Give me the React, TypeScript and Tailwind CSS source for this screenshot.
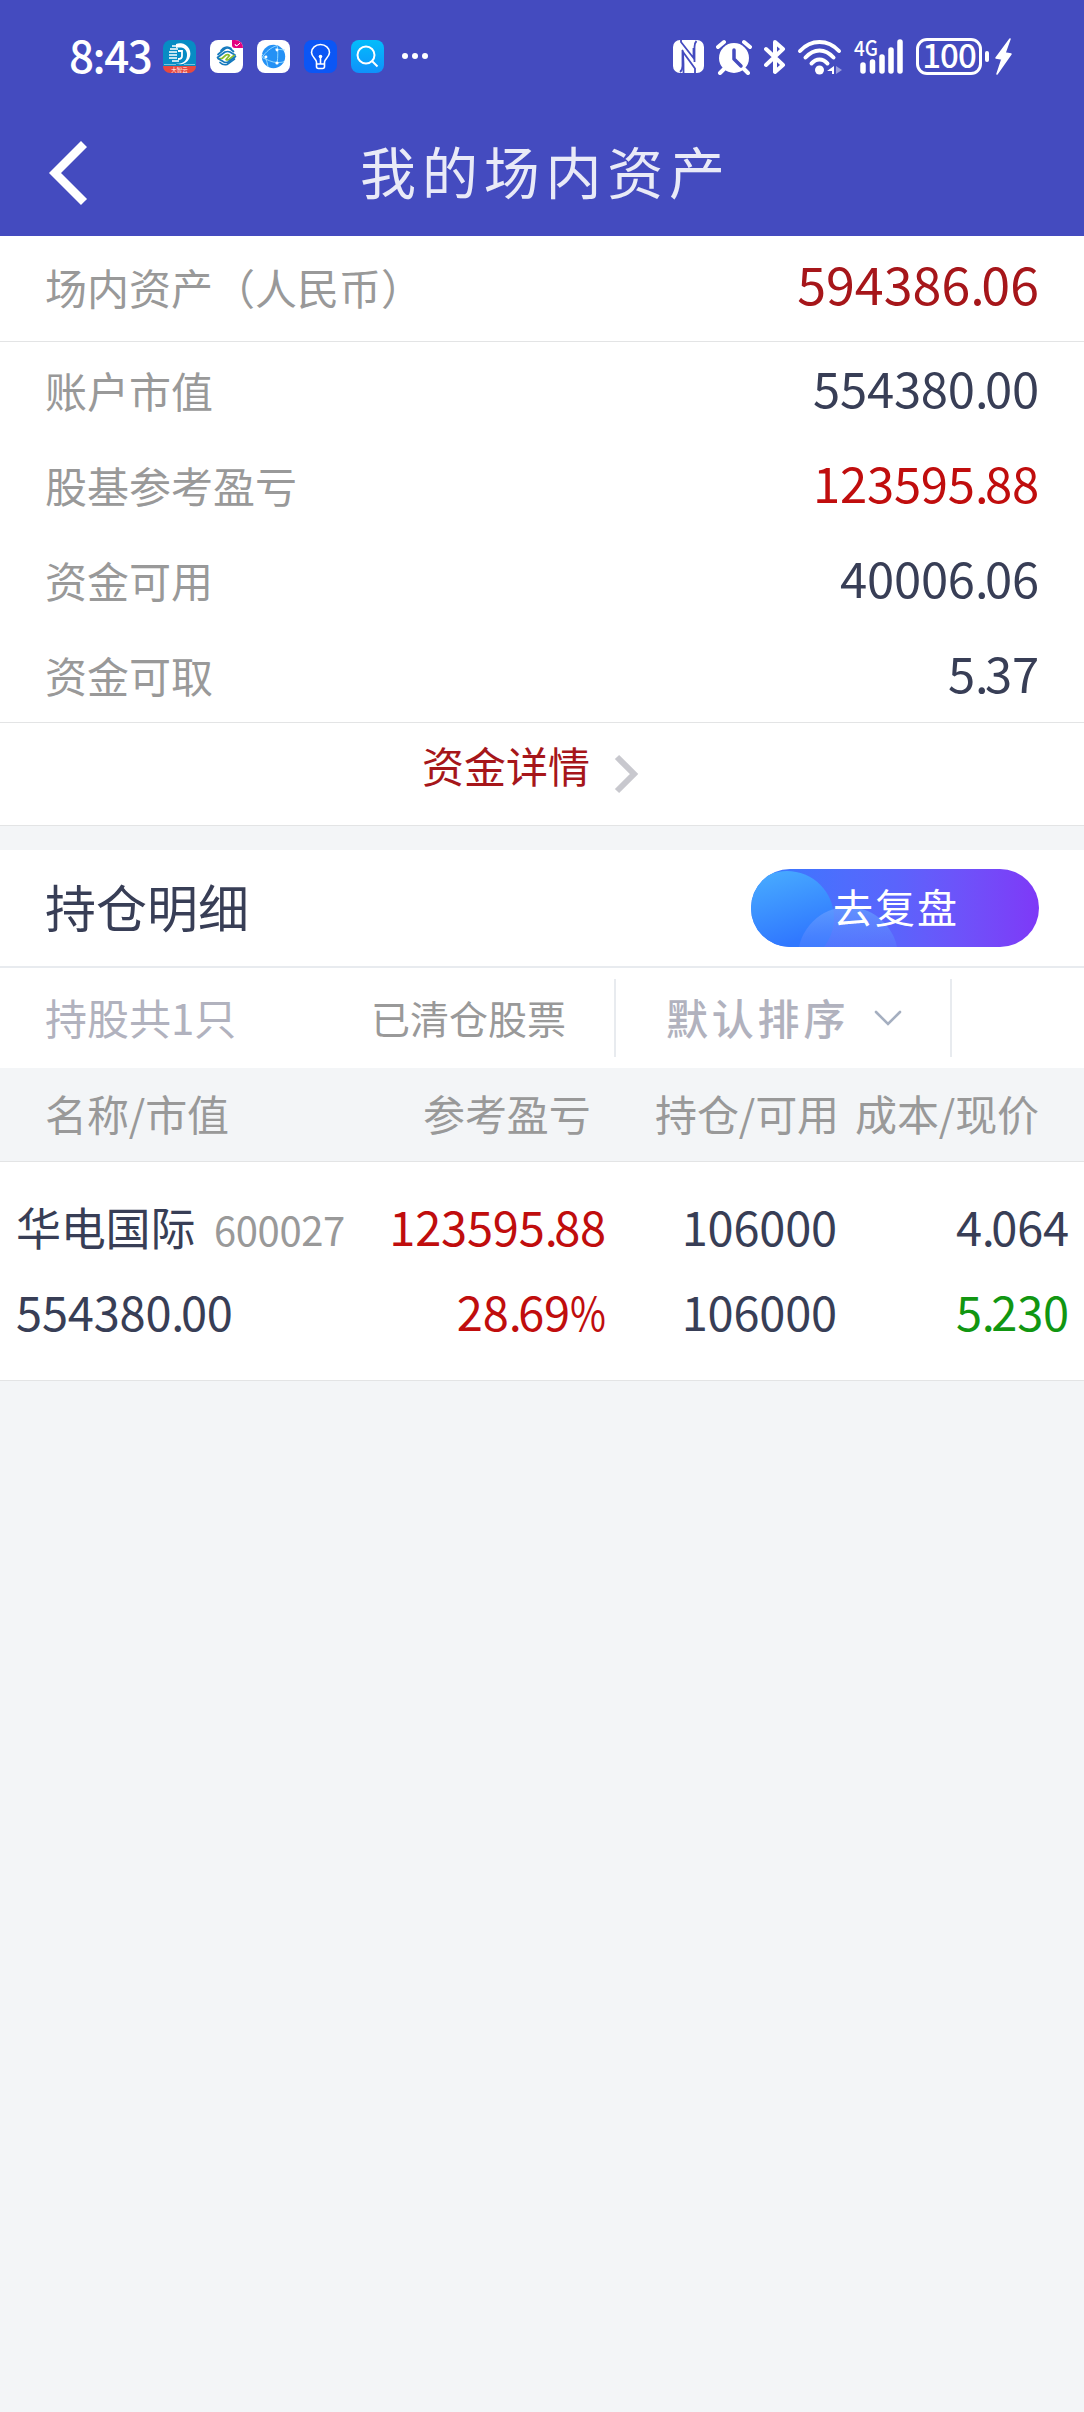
import type { ReactNode } from 'react';

const summary = [
  { label: '账户市值', value: '554380.00', color: 'text-[#383e56]' },
  { label: '股基参考盈亏', value: '123595.88', color: 'text-[#c00d0d]' },
  { label: '资金可用', value: '40006.06', color: 'text-[#383e56]' },
  { label: '资金可取', value: '5.37', color: 'text-[#383e56]' },
];

// Figures are set with a tight decimal point
const Num = ({ value }: { value: string }) => {
  const [whole, rest] = value.split('.');
  return (
    <>
      {whole}
      <span className="tracking-[-3.500px]">.</span>
      {rest}
    </>
  );
};

const AppIcon = ({ children }: { children: ReactNode }) => (
  <svg className="size-[33px]" viewBox="0 0 33 33" fill="none">
    {children}
  </svg>
);

const StatusBar = () => (
  <div className="flex h-[110px] items-center pt-[3px] pl-[69px] text-white">
    <span className="w-[94px] pb-[5px] text-[44px] leading-none font-medium tracking-[-1.500px]">
      8:43
    </span>
    <div className="flex gap-[14px]">
      <AppIcon>
        <rect width="33" height="33" rx="8" fill="#078cc4" />
        <path d="M0 26h33a7 7 0 0 1-7 7H7a7 7 0 0 1-7-7Z" fill="#e8483f" />
        <path d="M1 24.500h12M21 24.500h11" stroke="#74c3df" />
        <path d="M13 4a10.500 10.500 0 1 1 0 19.500c7 1 11-3 11-8.500 0-4-2-7-6-7.500-2 0-4 0-5 .5Z" fill="#fff" />
        <path d="M9 6h7M7 9h8M6 12h8M6 15h8M6 18h8M9 21h7" stroke="#fff" strokeWidth="1.500" />
        <path d="M15 11h4v5q0 3-4 3" stroke="#fff" strokeWidth="1.800" />
        <text x="16.500" y="31.500" fontSize="5.500" textAnchor="middle" fill="#fff">大智云</text>
      </AppIcon>
      <AppIcon>
        <rect width="33" height="33" rx="8" fill="#fff" />
        <path d="M22 0h3a8 8 0 0 1 8 8h-8a3 3 0 0 1-3-3Z" fill="#e4007f" />
        <path d="m25 4 1 2 2-1 2-2" stroke="#fff" />
        <g strokeWidth="1.700" strokeLinecap="round" strokeLinejoin="round">
          <path d="M8 14.500 14.500 9q3-2 6 0l3 2.500" stroke="#1479bd" />
          <path d="M11 10.500 13 8.500q4-3 8 0" stroke="#1479bd" />
          <path d="M7.500 17.500 15 12q3-1 5 0l5 3" stroke="#1479bd" />
          <path d="M9 18.500h3l4-3.500q2-1 3.500.5L16 19.500q1.500 1 3 0l5-4" stroke="#8abf2b" />
          <path d="M8 18.500 14 22q2 1 4 0l7.500-5.500" stroke="#1479bd" />
          <path d="M10 22.500q3 3 7 2l7.500-5.500" stroke="#1479bd" />
        </g>
      </AppIcon>
      <AppIcon>
        <rect width="33" height="33" rx="8" fill="#fff" />
        <circle cx="16.500" cy="16.500" r="11.700" fill="#2491f5" />
        <path d="M20 5.500c-6 2-11 6-15 12 5 2 10 5 15 5 3 0 5 0 7-1M20 5.500c1 3 1 12 0 18M5 14c4 4 5 7 6 13M18 9l10 1" stroke="#9bdcff" strokeWidth="0.900" />
        <circle cx="20" cy="10" r="1.400" fill="#fff" />
        <circle cx="9" cy="17" r="1.400" fill="#fff" />
        <circle cx="20" cy="23" r="1.600" fill="#fff" />
      </AppIcon>
      <AppIcon>
        <rect width="33" height="33" rx="8" fill="#0b56f5" />
        <path
          d="M12.500 22c0-3-5-5-5-9.500a9 8 0 0 1 18 0c0 4.500-5 6.500-5 9.500v4.500q0 2-2 2h-4q-2 0-2-2V22M12.500 24h8M16.500 17v7"
          stroke="#fff"
          strokeWidth="1.600"
        />
        <circle cx="16.500" cy="16.500" r="1.800" fill="#fff" />
      </AppIcon>
      <AppIcon>
        <defs>
          <linearGradient id="search" x1="0" y1="0" x2="0" y2="1">
            <stop stopColor="#03bdfb" />
            <stop offset="1" stopColor="#0f91fb" />
          </linearGradient>
        </defs>
        <rect width="33" height="33" rx="8" fill="url(#search)" />
        <circle cx="15" cy="15" r="8.500" stroke="#fff" strokeWidth="2" />
        <path d="m21 21 5.500 5.500" stroke="#fff" strokeWidth="2" />
      </AppIcon>
    </div>
    <svg className="ml-[17px] h-[33px] w-[28px]" viewBox="0 0 28 33" fill="#fff">
      <circle cx="4" cy="16" r="3" />
      <circle cx="14" cy="16" r="3" />
      <circle cx="24" cy="16" r="3" />
    </svg>

    <div className="ml-[244px] flex items-center">
      {/* nfc */}
      <svg className="h-[33px] w-[31px]" viewBox="0 0 31 33" fill="none">
        <rect width="31" height="33" rx="7" fill="#fff" />
        <path d="M8 0v2l12.500 16V8M10.500 33v-9l-.5-12 12 16.500V33" stroke="#444bbf" strokeWidth="1.800" />
        <path d="M9.500 10v16q0 4-2.500 6M21.500 22V7q0-4 2-6" stroke="#444bbf" strokeWidth="1.800" />
      </svg>
      {/* alarm */}
      <svg className="ml-3 h-[36px] w-[36px]" viewBox="0 0 36 36">
        <circle cx="18" cy="19" r="15" fill="#fff" />
        <path d="m2 8 6-5M34 8l-6-5M8 30l-4 4M28 30l4 4" stroke="#fff" strokeWidth="4" strokeLinecap="round" />
        <path d="M18 11v9l7 7" fill="none" stroke="#444bbf" strokeWidth="3.500" strokeLinecap="round" strokeLinejoin="round" />
      </svg>
      {/* bluetooth */}
      <svg className="ml-3 h-[36px] w-[22px]" viewBox="0 0 22 36" fill="none">
        <path d="m2 10 17 16-8 7V3l8 7L2 26" stroke="#fff" strokeWidth="4" strokeLinecap="round" strokeLinejoin="round" />
      </svg>
      {/* wifi */}
      <svg className="ml-[11px] h-[36px] w-[45px]" viewBox="0 0 45 36" fill="none">
        <path d="M3 12C14 0 31 0 42 12M8.500 18.500C17 9 28 9 36.500 18.500M14.500 24.500C19 19 26 19 30.500 24.500" stroke="#fff" strokeWidth="4" strokeLinecap="round" />
        <circle cx="22.500" cy="31" r="4.500" fill="#fff" />
        <path d="M37 27v8h-2v-3h-5Z" fill="#fff" />
        <path d="m39 27 6 4-6 4Z" fill="#979bdd" />
      </svg>
      {/* mobile signal */}
      <svg className="ml-[11px] h-[38px] w-[51px] overflow-visible" viewBox="0 0 51 38">
        <text x="1" y="18" fontSize="21" fontWeight="500" fill="#fff" textLength="24" lengthAdjust="spacingAndGlyphs">4G</text>
        <path d="M10 27v6M19.500 24v9M29 19v14M38 12v21M47 4v29" stroke="#fff" strokeWidth="5.500" strokeLinecap="round" />
      </svg>
      <div className="ml-[12px] flex h-[37px] w-[66px] items-center justify-center rounded-[11px] border-[3px] border-white">
        <span className="pb-1 text-[33px] leading-none font-medium tracking-[-1px]">100</span>
      </div>
      <div className="ml-[3px] h-[11px] w-1 rounded-full bg-white" />
      <svg className="ml-[6px] h-[37px] w-[17px]" viewBox="0 0 17 37">
        <path d="M15 1 1 20l6 1-5 15 14-20-6-1Z" fill="#fff" stroke="#fff" strokeWidth="1.500" strokeLinejoin="round" />
      </svg>
    </div>
  </div>
);

const TitleBar = () => (
  <div className="flex h-[126px] items-center px-12">
    <svg className="h-[64px] w-[40px]" viewBox="0 0 40 64" fill="none">
      <path d="M36 3 7 32l29 29" stroke="#fff" strokeWidth="8.500" />
    </svg>
    <h1 className="flex-1 pr-[33px] pb-[6px] text-center text-[56px] tracking-[5.800px] text-[#e9eaf7]">
      我的场内资产
    </h1>
  </div>
);

const App = () => {
  return (
    <div className="min-h-[2412px] w-[1084px] bg-[#f3f5f7] font-['Noto_Sans_CJK_SC',sans-serif] leading-none whitespace-nowrap">
      <header className="bg-[#444bbf]">
        <StatusBar />
        <TitleBar />
      </header>

      <section className="bg-white">
        <div className="flex h-[106px] items-center justify-between border-b border-[#e3e4e5] px-[45px]">
          <span className="pb-1 text-[42px] text-[#999]">场内资产（人民币）</span>
          <span className="pb-3 text-[52px] text-[#a6161a]">
            <Num value="594386.06" />
          </span>
        </div>
        {summary.map(({ label, value, color }) => (
          <div key={label} className="flex h-[95px] items-center justify-between px-[45px]">
            <span className="text-[42px] text-[#999]">{label}</span>
            <span className={`pb-[6px] text-[49px] tracking-[-0.200px] ${color}`}>
              <Num value={value} />
            </span>
          </div>
        ))}
        <div className="flex h-[104px] items-center justify-center border-y border-[#e3e4e5] pr-[20px]">
          <span className="pb-[19px] text-[42px] text-[#a6161a]">资金详情</span>
          <svg className="ml-[22px] h-[42px] w-[30px]" viewBox="0 0 30 42" fill="none">
            <path d="m5 4 17 17L5 38" stroke="#c8c8ce" strokeWidth="6" />
          </svg>
        </div>
      </section>

      <section className="mt-6 bg-white">
        <div className="flex h-[118px] items-center justify-between border-b-2 border-[#e8ebef] px-[45px]">
          <h2 className="pb-[4px] text-[51px] text-[#383e56]">持仓明细</h2>
          <button className="relative h-[78px] w-[288px] overflow-hidden rounded-full bg-linear-to-r from-[#2e7bff] via-[#5a64fc] to-[#7e38f7]">
            <svg className="absolute inset-0" width="288" height="78" viewBox="0 0 288 78">
              <defs>
                <linearGradient id="bubble" x1="0" y1="0" x2="0.300" y2="1">
                  <stop stopColor="#4ab0ff" />
                  <stop offset="0.850" stopColor="#3078ff" />
                </linearGradient>
                <linearGradient id="glow" x1="0" y1="0" x2="0" y2="1">
                  <stop stopColor="#68a0ff" stopOpacity="0.750" />
                  <stop offset="0.450" stopColor="#5a80ff" stopOpacity="0.350" />
                </linearGradient>
              </defs>
              <circle cx="36" cy="49" r="47" fill="url(#bubble)" />
              <circle cx="97" cy="88" r="50" fill="url(#glow)" />
            </svg>
            <span className="relative block pb-[5px] pl-[2px] text-[40px] leading-none tracking-[2px] text-white">
              去复盘
            </span>
          </button>
        </div>

        <div className="flex h-[100px] items-center pl-[45px]">
          <span className="w-[326px] pb-[2px] text-[42px] text-[#b1b2be]">持股共1只</span>
          <span className="w-[243px] pb-[2px] text-[39px] text-[#999]">已清仓股票</span>
          <div className="flex h-[78px] w-[338px] items-center border-x-2 border-[#e8ebef] pl-[50px]">
            <span className="pb-[2px] text-[42px] font-medium tracking-[3.800px] text-[#b1b2be]">默认排序</span>
            <svg className="ml-[24px] h-[18px] w-[30px]" viewBox="0 0 30 18" fill="none">
              <path d="m3 3 12 12L27 3" stroke="#a5afc0" strokeWidth="2.600" strokeLinecap="round" />
            </svg>
          </div>
        </div>

        <div className="flex h-[94px] items-center border-b border-[#e3e4e5] bg-[#f3f5f7] px-[45px] pb-1 text-[42px] tracking-[-0.100px] text-[#999]">
          <span className="w-[378px]">名称/市值</span>
          <span className="w-[232px]">参考盈亏</span>
          <span className="flex-1">持仓/可用</span>
          <span>成本/现价</span>
        </div>

        <div className="flex h-[219px] flex-col border-b border-[#e3e4e5] pr-[15px] pl-4 pt-[21px] text-[47px] tracking-[-0.200px] text-[#383e56]">
          <div className="flex h-[85px] items-center">
            <span className="w-[198px] pt-[2px] text-[45px]">华电国际</span>
            <span className="pt-[6px] text-[40px] tracking-[-0.400px] text-[#999]">600027</span>
            <span className="flex-1 text-right text-[#c00d0d]">
              <Num value="123595.88" />
            </span>
            <span className="w-[231px] text-right">106000</span>
            <span className="w-[232px] text-right">
              <Num value="4.064" />
            </span>
          </div>
          <div className="flex h-[85px] items-center">
            <span>
              <Num value="554380.00" />
            </span>
            <span className="flex flex-1 justify-end text-[#c00d0d]">
              <Num value="28.69" />
              <span className="w-[36px] origin-left scale-x-[0.830]">%</span>
            </span>
            <span className="w-[231px] text-right">106000</span>
            <span className="w-[232px] text-right text-[#119611]">
              <Num value="5.230" />
            </span>
          </div>
        </div>
      </section>
    </div>
  );
};

export default App;
